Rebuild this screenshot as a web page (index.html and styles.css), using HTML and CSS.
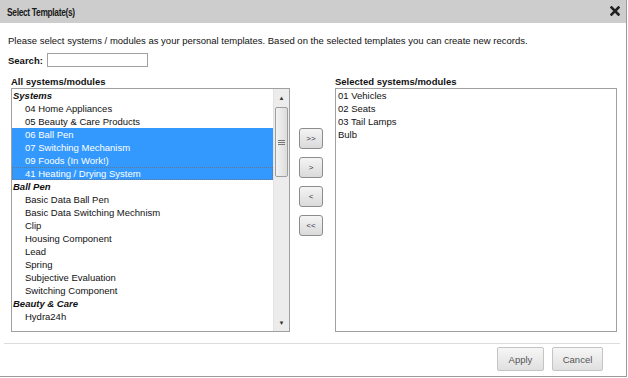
FILE: index.html
```html
<!DOCTYPE html>
<html>
<head>
    <meta charset="UTF-8">
    <title>Select Template(s)</title>
    <link rel="stylesheet" href="styles.css">
</head>
<body>
    <div class="dialog">
        <div class="titlebar">
            <span class="title">Select Template(s)</span>
            <svg class="close" width="10" height="10" viewBox="0 0 10 10">
                <path d="M1.5 1.5 L8.5 8.5 M8.5 1.5 L1.5 8.5" stroke="#222" stroke-width="2.6" stroke-linecap="square"/>
            </svg>
        </div>

        <div class="content">
            <p class="intro">Please select systems / modules as your personal templates. Based on the selected templates you can create new records.</p>
            <div class="search-row">
                <label class="label">Search:</label>
                <input type="text" class="search-input">
            </div>

            <div class="picker">
                <div class="column">
                    <div class="label list-label">All systems/modules</div>
                    <div class="listbox">
                        <div class="list-items">
                            <div class="group">Systems</div>
                            <div class="option">04 Home Appliances</div>
                            <div class="option">05 Beauty &amp; Care Products</div>
                            <div class="option selected">06 Ball Pen</div>
                            <div class="option selected">07 Switching Mechanism</div>
                            <div class="option selected">09 Foods (In Work!)</div>
                            <div class="option selected focused">41 Heating / Drying System</div>
                            <div class="group">Ball Pen</div>
                            <div class="option">Basic Data Ball Pen</div>
                            <div class="option">Basic Data Switching Mechnism</div>
                            <div class="option">Clip</div>
                            <div class="option">Housing Component</div>
                            <div class="option">Lead</div>
                            <div class="option">Spring</div>
                            <div class="option">Subjective Evaluation</div>
                            <div class="option">Switching Component</div>
                            <div class="group">Beauty &amp; Care</div>
                            <div class="option">Hydra24h</div>
                        </div>
                        <div class="scrollbar">
                            <div class="arrow">&#9650;</div>
                            <div class="track">
                                <div class="thumb"><span class="grip"></span></div>
                            </div>
                            <div class="arrow">&#9660;</div>
                        </div>
                    </div>
                </div>

                <div class="move-buttons">
                    <button class="move">&gt;&gt;</button>
                    <button class="move">&gt;</button>
                    <button class="move">&lt;</button>
                    <button class="move">&lt;&lt;</button>
                </div>

                <div class="column">
                    <div class="label list-label">Selected systems/modules</div>
                    <div class="listbox selected-box">
                        <div class="list-items">
                            <div class="plain">01 Vehicles</div>
                            <div class="plain">02 Seats</div>
                            <div class="plain">03 Tail Lamps</div>
                            <div class="plain">Bulb</div>
                        </div>
                    </div>
                </div>
            </div>
        </div>

        <div class="footer">
            <button class="action apply">Apply</button>
            <button class="action cancel">Cancel</button>
        </div>
    </div>
</body>
</html>
```

FILE: styles.css
```css
:root {
    --title-bg: #cdcdcd;
    --border-color: #a0a0a0;
    --select-color: #3399ff;
    --text-color: #111;
}

* {
    box-sizing: border-box;
    margin: 0;
    padding: 0;
}

body {
    margin: 0;
    font-family: 'Liberation Sans', Arial, sans-serif;
    font-size: 9.5px;
    color: var(--text-color);
    background: #fff;
}

.dialog {
    width: 627px;
    height: 377px;
    border-right: 1px solid #9a9a9a;
    border-bottom: 1px solid #9a9a9a;
    display: flex;
    flex-direction: column;
}

.titlebar {
    height: 23px;
    background: var(--title-bg);
    display: flex;
    align-items: center;
    justify-content: space-between;
    padding: 0 6px 0 7px;
}

/* header font is a condensed bold, squeeze Liberation Sans to match */
.title {
    font-weight: bold;
    font-size: 10.5px;
    letter-spacing: -0.4px;
    color: #1a1a1a;
    transform: scaleX(0.8);
    transform-origin: left center;
}

.close {
    display: block;
    margin-top: -1px;
}

.content {
    flex: 1;
    padding: 11px 0 0 0;
}

.intro {
    padding-left: 8px;
    line-height: 13px;
}

.search-row {
    display: flex;
    align-items: center;
    gap: 4px;
    padding-left: 8px;
    margin-top: 6px;
    height: 14px;
}

.label {
    font-weight: bold;
}

.search-input {
    width: 101px;
    height: 14px;
    border: 1px solid var(--border-color);
    font-size: 11px;
}

.picker {
    display: flex;
    margin-top: 8px;
    padding-left: 11px;
}

.column {
    display: flex;
    flex-direction: column;
}

.list-label {
    line-height: 13px;
    height: 13px;
}

.listbox {
    width: 279px;
    height: 244px;
    border: 1px solid var(--border-color);
    display: flex;
    overflow: hidden;
}

.selected-box {
    width: 282px;
}

.list-items {
    flex: 1;
    line-height: 13px;
    white-space: nowrap;
}

.group {
    font-weight: bold;
    font-style: italic;
    padding-left: 1px;
}

.option {
    padding-left: 13px;
}

.option.selected {
    background: var(--select-color);
    color: #fff;
}

.option.focused {
    outline: 1px dotted rgba(140, 90, 40, 0.55);
    outline-offset: -1px;
}

.plain {
    padding-left: 2px;
}

.scrollbar {
    width: 16px;
    display: flex;
    flex-direction: column;
    background: #ececec;
    border-left: 1px solid #e2e2e2;
}

.arrow {
    height: 17px;
    font-size: 6px;
    color: #333;
    display: flex;
    align-items: center;
    justify-content: center;
}

.track {
    flex: 1;
    padding: 1px 1px 0 1px;
}

.thumb {
    height: 70px;
    border: 1px solid #9e9e9e;
    border-radius: 2px;
    background: linear-gradient(to right, #f3f3f3, #dcdcdc);
    display: flex;
    align-items: center;
    justify-content: center;
}

.grip {
    width: 7px;
    height: 5px;
    border-top: 1px solid #777;
    border-bottom: 1px solid #777;
    background: linear-gradient(#777, #777) center / 7px 1px no-repeat;
}

.move-buttons {
    display: flex;
    flex-direction: column;
    gap: 8px;
    padding-top: 53px;
    margin: 0 12px 0 9px;
}

.move {
    width: 24px;
    height: 21px;
    border: 1px solid #8c8c8c;
    border-radius: 3px;
    background: linear-gradient(#f4f4f4, #dadada);
    font-family: 'Liberation Sans', Arial, sans-serif;
    font-size: 8px;
    color: #334;
}

.footer {
    border-top: 1px solid #dcdcdc;
    margin: 0 6px 0 4px;
    height: 33px;
    display: flex;
    justify-content: flex-end;
    align-items: center;
    gap: 8px;
    padding: 0 17px 2px 0;
}

.action {
    height: 24px;
    border: 1px solid #c4c4c4;
    border-radius: 2px;
    background: linear-gradient(#f6f6f6, #e0e0e0);
    font-family: 'Liberation Sans', Arial, sans-serif;
    font-size: 9.5px;
    color: #555;
}

.apply {
    width: 47px;
}

.cancel {
    width: 51px;
}
```
